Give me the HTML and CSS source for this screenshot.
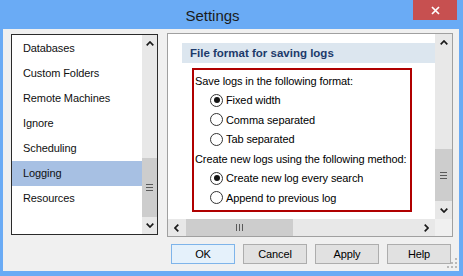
FILE: index.html
```html
<!DOCTYPE html>
<html lang="en">
<head>
  <meta charset="UTF-8" />
  <title>Settings</title>
  <link rel="stylesheet" href="styles.css">
</head>
<body>
  <div class="window">
    <div class="titlebar">
      <div class="title">Settings</div>
      <div class="close">
        <svg width="9" height="9" viewBox="0 0 9 9"><path d="M1 1 L8 8 M8 1 L1 8" stroke="#fff" stroke-width="1.7" fill="none"/></svg>
      </div>
    </div>

    <div class="client">
      <div class="main">
        <div class="listbox">
          <ul class="items">
            <li>Databases</li>
            <li>Custom Folders</li>
            <li>Remote Machines</li>
            <li>Ignore</li>
            <li>Scheduling</li>
            <li class="selected">Logging</li>
            <li>Resources</li>
          </ul>
          <div class="vscroll narrow">
            <div class="arrow"><svg width="8" height="5" viewBox="0 0 8 5"><path d="M0.7 4.3 L4 1 L7.3 4.3" fill="none" stroke="#1a1a1a" stroke-width="1.7"/></svg></div>
            <div class="track"><div class="thumb list-thumb"><span class="grip-h"><i></i><i></i><i></i></span></div></div>
            <div class="arrow"><svg width="8" height="5" viewBox="0 0 8 5"><path d="M0.7 0.7 L4 4 L7.3 0.7" fill="none" stroke="#1a1a1a" stroke-width="1.7"/></svg></div>
          </div>
        </div>

        <div class="panel">
          <div class="panel-top">
            <div class="viewport">
              <div class="section-head">File format for saving logs</div>
              <div class="group">
                <div class="row">Save logs in the following format:</div>
                <div class="row radio checked"><span class="dot"></span>Fixed width</div>
                <div class="row radio"><span class="dot"></span>Comma separated</div>
                <div class="row radio"><span class="dot"></span>Tab separated</div>
                <div class="row">Create new logs using the following method:</div>
                <div class="row radio checked"><span class="dot"></span>Create new log every search</div>
                <div class="row radio"><span class="dot"></span>Append to previous log</div>
              </div>
            </div>
            <div class="vscroll">
              <div class="arrow"><svg width="8" height="5" viewBox="0 0 8 5"><path d="M0.7 4.3 L4 1 L7.3 4.3" fill="none" stroke="#1a1a1a" stroke-width="1.7"/></svg></div>
              <div class="track"><div class="thumb panel-thumb"><span class="grip-h"><i></i><i></i><i></i></span></div></div>
              <div class="arrow"><svg width="8" height="5" viewBox="0 0 8 5"><path d="M0.7 0.7 L4 4 L7.3 0.7" fill="none" stroke="#1a1a1a" stroke-width="1.7"/></svg></div>
            </div>
          </div>
          <div class="panel-bottom">
            <div class="hscroll">
              <div class="arrow"><svg width="5" height="8" viewBox="0 0 5 8"><path d="M4.3 0.7 L1 4 L4.3 7.3" fill="none" stroke="#1a1a1a" stroke-width="1.7"/></svg></div>
              <div class="htrack"><div class="hthumb"><span class="grip-v"><i></i><i></i><i></i></span></div></div>
              <div class="arrow"><svg width="5" height="8" viewBox="0 0 5 8"><path d="M0.7 0.7 L4 4 L0.7 7.3" fill="none" stroke="#1a1a1a" stroke-width="1.7"/></svg></div>
            </div>
            <div class="corner"></div>
          </div>
        </div>
      </div>

      <div class="buttons">
        <div class="btn default">OK</div>
        <div class="btn">Cancel</div>
        <div class="btn">Apply</div>
        <div class="btn">Help</div>
      </div>

      <svg class="size-grip" width="11" height="11" viewBox="0 0 11 11">
        <rect x="8" y="0" width="2" height="2" fill="#b9b9b9"/>
        <rect x="4" y="4" width="2" height="2" fill="#b9b9b9"/>
        <rect x="8" y="4" width="2" height="2" fill="#b9b9b9"/>
        <rect x="0" y="8" width="2" height="2" fill="#b9b9b9"/>
        <rect x="4" y="8" width="2" height="2" fill="#b9b9b9"/>
        <rect x="8" y="8" width="2" height="2" fill="#b9b9b9"/>
      </svg>
    </div>
  </div>
</body>
</html>
```

FILE: styles.css
```css
* {
  box-sizing: border-box;
}

html, body {
  margin: 0;
  height: 100%;
  overflow: hidden;
}

body {
  background: #6aabf5;
  font-family: "Liberation Sans", Arial, sans-serif;
  font-size: 11px;
  letter-spacing: -0.1px;
  color: #000;
}

.window {
  width: 463px;
  height: 276px;
  display: flex;
  flex-direction: column;
  padding: 0 4px 5px 3px;
}

/* title bar */
.titlebar {
  height: 29px;
  display: flex;
}

.title {
  flex: 1;
  text-align: center;
  padding: 7px 0 0 9px;
  font-size: 15px;
  line-height: 18px;
  letter-spacing: 0;
  color: #1b1b1b;
}

.close {
  width: 44px;
  height: 20px;
  margin-right: 2px;
  background: #c75050;
  display: flex;
  align-items: center;
  justify-content: center;
}

/* dialog body */
.client {
  flex: 1;
  position: relative;
  background: #f0f0f0;
  display: flex;
  flex-direction: column;
  padding: 4px 6px 0 8px;
}

.main {
  display: flex;
  align-items: flex-start;
  gap: 9px;
}

/* left list */
.listbox {
  width: 147px;
  height: 201px;
  margin-top: 1px;
  border: 1px solid #2b2b2b;
  background: #fff;
  display: flex;
}

.items {
  flex: 1;
  list-style: none;
  margin: 0;
  padding: 1px 0 0;
}

.items li {
  height: 25px;
  line-height: 25px;
  padding-left: 11px;
  color: #101010;
}

.items li.selected {
  background: #a7c0e3;
}

/* scrollbars */
.vscroll {
  width: 17px;
  background: #e8e8e8;
  display: flex;
  flex-direction: column;
}

.vscroll.narrow {
  width: 15px;
}

.arrow {
  width: 17px;
  height: 17px;
  flex-shrink: 0;
  display: flex;
  align-items: center;
  justify-content: center;
}

.narrow .arrow {
  width: 15px;
}

.track {
  flex: 1;
}

.thumb {
  background: #cdcdcd;
  display: flex;
  align-items: center;
  justify-content: center;
}

.list-thumb {
  margin-top: 106px;
  height: 59px;
}

.panel-thumb {
  margin-top: 98px;
  height: 52px;
}

.grip-h {
  display: flex;
  flex-direction: column;
  gap: 2px;
}

.grip-h i {
  display: block;
  width: 7px;
  height: 1px;
  background: #5a5a5a;
}

.hscroll {
  flex: 1;
  display: flex;
  background: #e8e8e8;
}

.htrack {
  flex: 1;
}

.hthumb {
  margin-left: 1px;
  width: 107px;
  height: 17px;
  background: #cdcdcd;
  display: flex;
  align-items: center;
  justify-content: center;
}

.grip-v {
  display: flex;
  gap: 2px;
}

.grip-v i {
  display: block;
  width: 1px;
  height: 7px;
  background: #5a5a5a;
}

/* right panel */
.panel {
  width: 286px;
  height: 204px;
  border: 1px solid #a0a0a0;
  background: #fff;
  display: flex;
  flex-direction: column;
}

.panel-top {
  height: 185px;
  display: flex;
}

.viewport {
  flex: 1;
  overflow: hidden;
  padding: 9px 0 0 14px;
}

.panel-bottom {
  height: 17px;
  display: flex;
}

.corner {
  width: 17px;
  background: #f0f0f0;
}

.section-head {
  height: 20px;
  line-height: 20px;
  padding-left: 8px;
  background: #dce6ef;
  color: #1c3a6b;
  font-size: 11.5px;
  font-weight: bold;
  letter-spacing: 0;
  white-space: nowrap;
}

.group {
  width: 220px;
  height: 144px;
  margin: 5px 0 0 10px;
  border: 2px solid #b00000;
  padding: 1px 0 0 1px;
}

.row {
  height: 19.5px;
  display: flex;
  align-items: center;
  white-space: nowrap;
}

.radio {
  padding-left: 15px;
  gap: 3px;
}

.dot {
  width: 13px;
  height: 13px;
  border: 1px solid #333;
  border-radius: 50%;
  background: #fff;
  display: flex;
  align-items: center;
  justify-content: center;
}

.checked .dot::after {
  content: "";
  width: 6px;
  height: 6px;
  border-radius: 50%;
  background: #141414;
}

/* buttons */
.buttons {
  display: flex;
  justify-content: flex-end;
  gap: 8px;
  margin-top: 7px;
  padding-right: 2px;
}

.btn {
  width: 64px;
  height: 20px;
  border: 1px solid #adadad;
  background: #e1e1e1;
  display: flex;
  align-items: center;
  justify-content: center;
}

.btn.default {
  background: #e5f1fb;
  border-color: #7eb4ea;
}

.size-grip {
  position: absolute;
  right: 1px;
  bottom: 2px;
}
```
